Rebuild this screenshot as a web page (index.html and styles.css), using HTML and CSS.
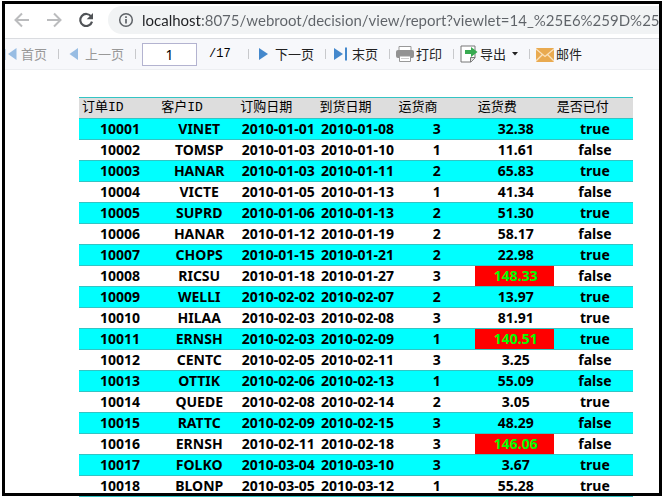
FILE: index.html
```
<!DOCTYPE html>
<html lang="zh-CN">
<head>
<meta charset="utf-8">
<title>报表</title>
<link rel="stylesheet" href="styles.css">
</head>
<body>
<div class="frame"></div>
<header class="nav">
  <button class="nav-btn" aria-label="后退"><svg width="16" height="16" viewBox="0 0 16 16"><path d="M15 8H2M8 1.5L1.5 8L8 14.5" fill="none" stroke="#bbbcbe" stroke-width="2"/></svg></button>
  <button class="nav-btn" aria-label="前进"><svg width="16" height="16" viewBox="0 0 16 16"><path d="M1 8H14M8 1.5L14.5 8L8 14.5" fill="none" stroke="#bbbcbe" stroke-width="2"/></svg></button>
  <button class="nav-btn" aria-label="刷新"><svg width="16" height="16" viewBox="0 0 16 16"><path d="M13.2 4.6A6 6 0 1 0 14 9.6" fill="none" stroke="#505357" stroke-width="2.2"/><path d="M15 1V7.3H8.7Z" fill="#505357"/></svg></button>
  <div class="address">
    <svg width="16" height="16" viewBox="0 0 16 16"><circle cx="8" cy="8" r="6.3" fill="none" stroke="#5f6368" stroke-width="1.5"/><path d="M8 7V11.6M8 4.3V6" stroke="#5f6368" stroke-width="1.7"/></svg>
    <input class="url" aria-label="地址" value="localhost:8075/webroot/decision/view/report?viewlet=14_%25E6%259D%25A">
  </div>
</header>
<nav class="toolbar">
  <button class="tool off"><svg class="first" width="14" height="18" viewBox="0 0 14 18"><path d="M.5 4V15" stroke="#c3d8ee"/><path d="M11.500 3V15L3 9Z" fill="#98bde3"/></svg>首页</button>
  <span class="sep"></span>
  <button class="tool off"><svg width="18" height="18" viewBox="0 0 18 18"><path d="M13 3V15L4.500 9Z" fill="#98bde3"/></svg>上一页</button>
  <span class="sep"></span>
  <input class="page" aria-label="页码" value="1">
  <span class="total">/17</span>
  <span class="sep"></span>
  <button class="tool"><svg width="18" height="18" viewBox="0 0 18 18"><path d="M4 3V15L13 9Z" fill="#4488cc"/></svg>下一页</button>
  <span class="sep"></span>
  <button class="tool"><svg width="18" height="18" viewBox="0 0 18 18"><path d="M2 3V15L11 9Z" fill="#4488cc"/><path d="M14 2.500V15.500" stroke="#4488cc" stroke-width="2"/></svg>末页</button>
  <span class="sep"></span>
  <button class="tool"><svg width="18" height="18" viewBox="0 0 18 18"><path d="M3 7V1.500H15V7" fill="#fff" stroke="#999"/><rect y="5" width="18" height="8" rx="2" fill="#929292"/><path d="M3.500 11H14.500V16.500H3.500Z" fill="#fff" stroke="#999"/><path d="M5 13.500H13" stroke="#ccc"/></svg>打印</button>
  <span class="sep"></span>
  <button class="tool"><svg width="18" height="18" viewBox="0 0 18 18"><path d="M1 1H15V13L11 17H1Z" fill="#fff" stroke="#777"/><path d="M15 12.500H10.500V17" fill="#ddd" stroke="#777"/><path d="M5 5H11V2L17.500 7L11 12V9H5Z" fill="#37aa50"/></svg>导出<svg class="caret" width="6" height="4" viewBox="0 0 6 4"><path d="M0 0H6L3 3.500Z" fill="#222"/></svg></button>
  <span class="sep"></span>
  <button class="tool"><svg width="18" height="18" viewBox="0 0 18 18"><rect y="3" width="18" height="14" rx="1" fill="#e9aa50"/><path d="M0 4L9 11.500L18 4M0 16L6.500 9.500M18 16L11.500 9.500" fill="none" stroke="#fae2bd" stroke-width="1.300"/></svg>邮件</button>
</nav>
<main class="report">
  <table class="orders">
    <thead><tr><th>订单ID</th><th>客户ID</th><th>订购日期</th><th>到货日期</th><th>运货商</th><th>运货费</th><th>是否已付</th></tr></thead>
    <tbody>
      <tr><td>10001</td><td>VINET</td><td>2010-01-01</td><td>2010-01-08</td><td>3</td><td>32.38</td><td>true</td></tr>
      <tr><td>10002</td><td>TOMSP</td><td>2010-01-03</td><td>2010-01-10</td><td>1</td><td>11.61</td><td>false</td></tr>
      <tr><td>10003</td><td>HANAR</td><td>2010-01-03</td><td>2010-01-11</td><td>2</td><td>65.83</td><td>true</td></tr>
      <tr><td>10004</td><td>VICTE</td><td>2010-01-05</td><td>2010-01-13</td><td>1</td><td>41.34</td><td>false</td></tr>
      <tr><td>10005</td><td>SUPRD</td><td>2010-01-06</td><td>2010-01-13</td><td>2</td><td>51.30</td><td>true</td></tr>
      <tr><td>10006</td><td>HANAR</td><td>2010-01-12</td><td>2010-01-19</td><td>2</td><td>58.17</td><td>false</td></tr>
      <tr><td>10007</td><td>CHOPS</td><td>2010-01-15</td><td>2010-01-21</td><td>2</td><td>22.98</td><td>true</td></tr>
      <tr><td>10008</td><td>RICSU</td><td>2010-01-18</td><td>2010-01-27</td><td>3</td><td class="alert">148.33</td><td>false</td></tr>
      <tr><td>10009</td><td>WELLI</td><td>2010-02-02</td><td>2010-02-07</td><td>2</td><td>13.97</td><td>true</td></tr>
      <tr><td>10010</td><td>HILAA</td><td>2010-02-03</td><td>2010-02-08</td><td>3</td><td>81.91</td><td>true</td></tr>
      <tr><td>10011</td><td>ERNSH</td><td>2010-02-03</td><td>2010-02-09</td><td>1</td><td class="alert">140.51</td><td>true</td></tr>
      <tr><td>10012</td><td>CENTC</td><td>2010-02-05</td><td>2010-02-11</td><td>3</td><td>3.25</td><td>false</td></tr>
      <tr><td>10013</td><td>OTTIK</td><td>2010-02-06</td><td>2010-02-13</td><td>1</td><td>55.09</td><td>false</td></tr>
      <tr><td>10014</td><td>QUEDE</td><td>2010-02-08</td><td>2010-02-14</td><td>2</td><td>3.05</td><td>true</td></tr>
      <tr><td>10015</td><td>RATTC</td><td>2010-02-09</td><td>2010-02-15</td><td>3</td><td>48.29</td><td>false</td></tr>
      <tr><td>10016</td><td>ERNSH</td><td>2010-02-11</td><td>2010-02-18</td><td>3</td><td class="alert">146.06</td><td>false</td></tr>
      <tr><td>10017</td><td>FOLKO</td><td>2010-03-04</td><td>2010-03-10</td><td>3</td><td>3.67</td><td>true</td></tr>
      <tr><td>10018</td><td>BLONP</td><td>2010-03-05</td><td>2010-03-12</td><td>1</td><td>55.28</td><td>true</td></tr>
    </tbody>
  </table>
</main>
</body>
</html>
```
FILE: styles.css
```
* { box-sizing: border-box; }

body {
  margin: 0;
  padding: 4px 0 0 5px;
  overflow: hidden;
  background: #fff;
  color: #000;
  font: 13px/20px "Noto Sans", "Noto Sans CJK SC", sans-serif;
}

/* black outline drawn over the page edges */
.frame {
  position: fixed;
  inset: 1px 0 1px 2px;
  border: 3px solid #000;
  pointer-events: none;
  z-index: 1;
}

button, input {
  margin: 0;
  padding: 0;
  border: 0;
  background: none;
  color: inherit;
  font: inherit;
  white-space: nowrap;
}

svg { flex: none; }

.nav {
  display: flex;
  align-items: center;
  height: 35px;
  padding-left: 1px;
  padding-bottom: 2px;
  border-bottom: 1px solid #dadce0;
}

.nav-btn {
  display: flex;
  align-items: center;
  justify-content: center;
  flex: none;
  width: 32px;
  height: 32px;
}

.address {
  display: flex;
  flex: 1;
  align-items: center;
  gap: 8px;
  min-width: 0;
  height: 28px;
  margin-left: 6px;
  padding-left: 10px;
  border-radius: 14px 0 0 14px;
  background: #f1f3f4;
}

.url {
  flex: 1;
  min-width: 0;
  height: 28px;
  font: 15px/28px Lato, sans-serif;
  color: transparent;
  /* host is darker than the rest of the address */
  background: linear-gradient(90deg, #202124 60px, #5f6368 60px);
  -webkit-background-clip: text;
  background-clip: text;
}

.toolbar {
  display: flex;
  align-items: center;
  height: 31px;
  border-bottom: 1px solid #eceef1;
  background: #f7f8fb;
}

.tool {
  display: flex;
  align-items: center;
  flex: none;
  gap: 2px;
  color: #222;
  font-family: "Noto Sans CJK SC", sans-serif;
}

.off { color: #999; }

.caret { margin-left: 4px; }

.sep {
  flex: none;
  width: 1px;
  height: 10px;
  margin: 0 6px 0 11px;
  background: #c8c9cc;
}

.page {
  width: 55px;
  height: 23px;
  border: 1px solid #b3b3d0;
  background: #fff;
  color: #000;
  font-size: 14px;
  text-align: center;
}

.total {
  width: 33px;
  margin-left: 12px;
  font-family: "Liberation Mono", monospace;
  font-size: 12px;
}

.total + .sep { margin-left: 6px; }

.report { padding: 27px 29px 0 74px; }

.orders {
  width: 100%;
  border-spacing: 0;
  border-top: 1px solid #33c4c4;
  table-layout: fixed;
}

th, td {
  height: 21px;
  padding: 0 0 0 3px;
  border-bottom: 1px solid #33c4c4;
  line-height: 20px;
  white-space: nowrap;
}

th {
  background: #ddd;
  font-family: "Liberation Mono", "Noto Sans CJK SC", monospace;
  font-size: 13px;
  font-weight: 400;
  text-align: left;
}

td {
  font-size: 14px;
  font-weight: 700;
  text-align: center;
}

tbody tr:nth-child(odd) { background: #0ff; }

.alert {
  background: #f00;
  color: #0f0;
}
```
